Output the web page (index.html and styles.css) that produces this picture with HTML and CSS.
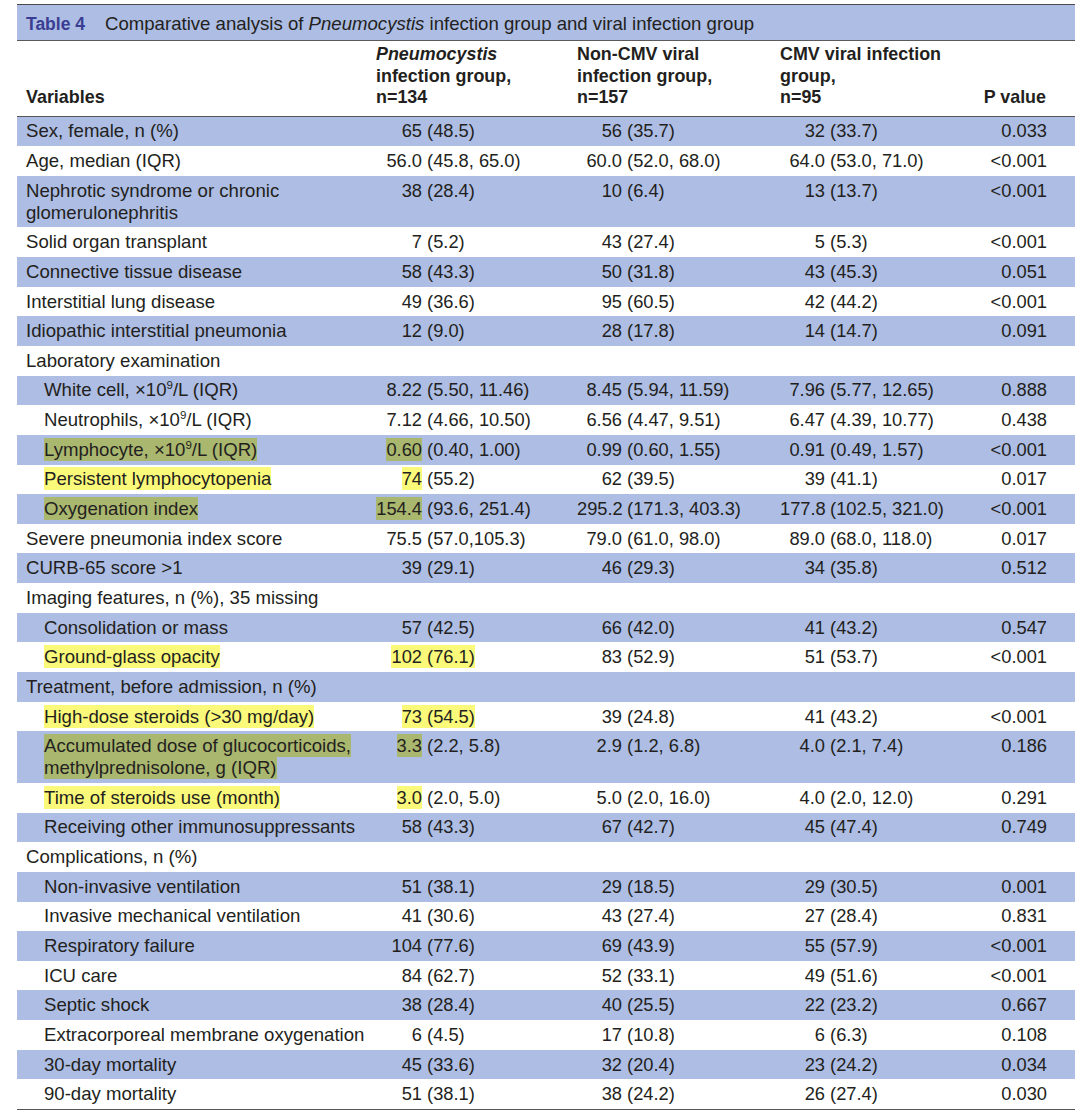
FILE: index.html
```html
<!DOCTYPE html>
<html lang="en">
<head>
<meta charset="utf-8">
<title>Table 4</title>
<link rel="stylesheet" href="styles.css">
</head>
<body>
<div class="sheet">
  <div class="caption"><span class="label">Table 4</span>Comparative analysis of <i>Pneumocystis</i> infection group and viral infection group</div>
  <table class="data">
    <colgroup>
      <col class="c-var"><col class="c-g1"><col class="c-g2"><col class="c-g3"><col class="c-p">
    </colgroup>
    <thead>
      <tr>
        <th class="var">Variables</th>
        <th class="grp"><i>Pneumocystis</i><br>infection group,<br>n=134</th>
        <th class="grp">Non-CMV viral<br>infection group,<br>n=157</th>
        <th class="grp">CMV viral infection<br>group,<br>n=95</th>
        <th class="pv">P value</th>
      </tr>
    </thead>
    <tbody>
      <tr><td class="var">Sex, female, n (%)</td><td class="num g1"><span class="lead">65</span> (48.5)</td><td class="num g2"><span class="lead">56</span> (35.7)</td><td class="num g3"><span class="lead">32</span> (33.7)</td><td class="pv">0.033</td></tr>
      <tr><td class="var">Age, median (IQR)</td><td class="num g1"><span class="lead">56.0</span> (45.8, 65.0)</td><td class="num g2"><span class="lead">60.0</span> (52.0, 68.0)</td><td class="num g3"><span class="lead">64.0</span> (53.0, 71.0)</td><td class="pv">&lt;0.001</td></tr>
      <tr><td class="var">Nephrotic syndrome or chronic glomerulonephritis</td><td class="num g1"><span class="lead">38</span> (28.4)</td><td class="num g2"><span class="lead">10</span> (6.4)</td><td class="num g3"><span class="lead">13</span> (13.7)</td><td class="pv">&lt;0.001</td></tr>
      <tr><td class="var">Solid organ transplant</td><td class="num g1"><span class="lead">7</span> (5.2)</td><td class="num g2"><span class="lead">43</span> (27.4)</td><td class="num g3"><span class="lead">5</span> (5.3)</td><td class="pv">&lt;0.001</td></tr>
      <tr><td class="var">Connective tissue disease</td><td class="num g1"><span class="lead">58</span> (43.3)</td><td class="num g2"><span class="lead">50</span> (31.8)</td><td class="num g3"><span class="lead">43</span> (45.3)</td><td class="pv">0.051</td></tr>
      <tr><td class="var">Interstitial lung disease</td><td class="num g1"><span class="lead">49</span> (36.6)</td><td class="num g2"><span class="lead">95</span> (60.5)</td><td class="num g3"><span class="lead">42</span> (44.2)</td><td class="pv">&lt;0.001</td></tr>
      <tr><td class="var">Idiopathic interstitial pneumonia</td><td class="num g1"><span class="lead">12</span> (9.0)</td><td class="num g2"><span class="lead">28</span> (17.8)</td><td class="num g3"><span class="lead">14</span> (14.7)</td><td class="pv">0.091</td></tr>
      <tr><td class="var" colspan="5">Laboratory examination</td></tr>
      <tr><td class="var sub">White cell, ×10<sup>9</sup>/L (IQR)</td><td class="num g1"><span class="lead">8.22</span> (5.50, 11.46)</td><td class="num g2"><span class="lead">8.45</span> (5.94, 11.59)</td><td class="num g3"><span class="lead">7.96</span> (5.77, 12.65)</td><td class="pv">0.888</td></tr>
      <tr><td class="var sub">Neutrophils, ×10<sup>9</sup>/L (IQR)</td><td class="num g1"><span class="lead">7.12</span> (4.66, 10.50)</td><td class="num g2"><span class="lead">6.56</span> (4.47, 9.51)</td><td class="num g3"><span class="lead">6.47</span> (4.39, 10.77)</td><td class="pv">0.438</td></tr>
      <tr><td class="var sub"><span class="hl-g">Lymphocyte, ×10<sup>9</sup>/L (IQR)</span></td><td class="num g1"><span class="lead"><span class="hl-g">0.60</span></span> (0.40, 1.00)</td><td class="num g2"><span class="lead">0.99</span> (0.60, 1.55)</td><td class="num g3"><span class="lead">0.91</span> (0.49, 1.57)</td><td class="pv">&lt;0.001</td></tr>
      <tr><td class="var sub"><span class="hl">Persistent lymphocytopenia</span></td><td class="num g1"><span class="lead"><span class="hl">74</span></span> (55.2)</td><td class="num g2"><span class="lead">62</span> (39.5)</td><td class="num g3"><span class="lead">39</span> (41.1)</td><td class="pv">0.017</td></tr>
      <tr><td class="var sub"><span class="hl-g">Oxygenation index</span></td><td class="num g1"><span class="lead"><span class="hl-g">154.4</span></span> (93.6, 251.4)</td><td class="num g2"><span class="lead">295.2</span> (171.3, 403.3)</td><td class="num g3"><span class="lead">177.8</span> (102.5, 321.0)</td><td class="pv">&lt;0.001</td></tr>
      <tr><td class="var">Severe pneumonia index score</td><td class="num g1"><span class="lead">75.5</span> (57.0,105.3)</td><td class="num g2"><span class="lead">79.0</span> (61.0, 98.0)</td><td class="num g3"><span class="lead">89.0</span> (68.0, 118.0)</td><td class="pv">0.017</td></tr>
      <tr><td class="var">CURB-65 score &gt;1</td><td class="num g1"><span class="lead">39</span> (29.1)</td><td class="num g2"><span class="lead">46</span> (29.3)</td><td class="num g3"><span class="lead">34</span> (35.8)</td><td class="pv">0.512</td></tr>
      <tr><td class="var" colspan="5">Imaging features, n (%), 35 missing</td></tr>
      <tr><td class="var sub">Consolidation or mass</td><td class="num g1"><span class="lead">57</span> (42.5)</td><td class="num g2"><span class="lead">66</span> (42.0)</td><td class="num g3"><span class="lead">41</span> (43.2)</td><td class="pv">0.547</td></tr>
      <tr><td class="var sub"><span class="hl">Ground-glass opacity</span></td><td class="num g1"><span class="lead"><span class="hl">102</span></span><span class="hl"> (76.1)</span></td><td class="num g2"><span class="lead">83</span> (52.9)</td><td class="num g3"><span class="lead">51</span> (53.7)</td><td class="pv">&lt;0.001</td></tr>
      <tr><td class="var" colspan="5">Treatment, before admission, n (%)</td></tr>
      <tr><td class="var sub"><span class="hl">High-dose steroids (&gt;30 mg/day)</span></td><td class="num g1"><span class="lead"><span class="hl">73</span></span><span class="hl"> (54.5)</span></td><td class="num g2"><span class="lead">39</span> (24.8)</td><td class="num g3"><span class="lead">41</span> (43.2)</td><td class="pv">&lt;0.001</td></tr>
      <tr><td class="var sub"><span class="hl-g">Accumulated dose of glucocorticoids, methylprednisolone, g (IQR)</span></td><td class="num g1"><span class="lead"><span class="hl-g">3.3</span></span> (2.2, 5.8)</td><td class="num g2"><span class="lead">2.9</span> (1.2, 6.8)</td><td class="num g3"><span class="lead">4.0</span> (2.1, 7.4)</td><td class="pv">0.186</td></tr>
      <tr><td class="var sub"><span class="hl">Time of steroids use (month)</span></td><td class="num g1"><span class="lead"><span class="hl">3.0</span></span> (2.0, 5.0)</td><td class="num g2"><span class="lead">5.0</span> (2.0, 16.0)</td><td class="num g3"><span class="lead">4.0</span> (2.0, 12.0)</td><td class="pv">0.291</td></tr>
      <tr><td class="var sub">Receiving other immunosuppressants</td><td class="num g1"><span class="lead">58</span> (43.3)</td><td class="num g2"><span class="lead">67</span> (42.7)</td><td class="num g3"><span class="lead">45</span> (47.4)</td><td class="pv">0.749</td></tr>
      <tr><td class="var" colspan="5">Complications, n (%)</td></tr>
      <tr><td class="var sub">Non-invasive ventilation</td><td class="num g1"><span class="lead">51</span> (38.1)</td><td class="num g2"><span class="lead">29</span> (18.5)</td><td class="num g3"><span class="lead">29</span> (30.5)</td><td class="pv">0.001</td></tr>
      <tr><td class="var sub">Invasive mechanical ventilation</td><td class="num g1"><span class="lead">41</span> (30.6)</td><td class="num g2"><span class="lead">43</span> (27.4)</td><td class="num g3"><span class="lead">27</span> (28.4)</td><td class="pv">0.831</td></tr>
      <tr><td class="var sub">Respiratory failure</td><td class="num g1"><span class="lead">104</span> (77.6)</td><td class="num g2"><span class="lead">69</span> (43.9)</td><td class="num g3"><span class="lead">55</span> (57.9)</td><td class="pv">&lt;0.001</td></tr>
      <tr><td class="var sub">ICU care</td><td class="num g1"><span class="lead">84</span> (62.7)</td><td class="num g2"><span class="lead">52</span> (33.1)</td><td class="num g3"><span class="lead">49</span> (51.6)</td><td class="pv">&lt;0.001</td></tr>
      <tr><td class="var sub">Septic shock</td><td class="num g1"><span class="lead">38</span> (28.4)</td><td class="num g2"><span class="lead">40</span> (25.5)</td><td class="num g3"><span class="lead">22</span> (23.2)</td><td class="pv">0.667</td></tr>
      <tr><td class="var sub">Extracorporeal membrane oxygenation</td><td class="num g1"><span class="lead">6</span> (4.5)</td><td class="num g2"><span class="lead">17</span> (10.8)</td><td class="num g3"><span class="lead">6</span> (6.3)</td><td class="pv">0.108</td></tr>
      <tr><td class="var sub">30-day mortality</td><td class="num g1"><span class="lead">45</span> (33.6)</td><td class="num g2"><span class="lead">32</span> (20.4)</td><td class="num g3"><span class="lead">23</span> (24.2)</td><td class="pv">0.034</td></tr>
      <tr><td class="var sub">90-day mortality</td><td class="num g1"><span class="lead">51</span> (38.1)</td><td class="num g2"><span class="lead">38</span> (24.2)</td><td class="num g3"><span class="lead">26</span> (27.4)</td><td class="pv">0.030</td></tr>
    </tbody>
  </table>
</div>
</body>
</html>
```

FILE: styles.css
```css
html, body {
  margin: 0;
  padding: 0;
  background: #ffffff;
}

body {
  font-family: "Liberation Sans", Arial, sans-serif;
  color: #231f20;
}

.sheet {
  width: 1058px;
  margin: 4px 0 0 17px;
}

.caption {
  background: #adbde3;
  border-top: 1.5px solid #4a4a4a;
  border-bottom: 1px solid #5a5a5a;
  padding-top: 3px;
  height: 32px;
  line-height: 32px;
  padding-left: 9px;
  font-size: 18.6px;
  color: #231f20;
  white-space: nowrap;
}

.caption .label {
  font-weight: bold;
  font-size: 17.5px;
  color: #3a3e93;
  margin-right: 20px;
}

.data {
  width: 1058px;
  table-layout: fixed;
  border-collapse: collapse;
  border-bottom: 1.5px solid #555555;
  font-size: 18.3px;
}

.c-var { width: 350px; }
.c-g1 { width: 201px; }
.c-g2 { width: 203px; }
.c-g3 { width: 179px; }
.c-p { width: 125px; }

thead th {
  font-weight: bold;
  font-size: 17.9px;
  line-height: 21.5px;
  text-align: left;
  vertical-align: bottom;
  padding: 3px 0 7px 9px;
  border-bottom: 1.5px solid #555555;
}

thead th.pv {
  text-align: right;
  padding-right: 29px;
}

tbody tr:nth-child(odd) {
  background: #adbde3;
}

td {
  line-height: 22px;
  padding: 3.85px 0 3.8px 9px;
  vertical-align: top;
}

td.var {
  font-size: 18.6px;
}

td.sub {
  padding-left: 27px;
}

td.num {
  white-space: nowrap;
}

.lead {
  display: inline-block;
  text-align: right;
}

.g1 .lead { width: 46px; }
.g2 .lead { width: 45px; }
.g3 .lead { width: 45px; }

td.pv {
  text-align: right;
  padding-right: 28px;
}

sup {
  font-size: 0.62em;
  line-height: 0;
  vertical-align: 0.6em;
}

.hl {
  background: #fbf97a;
  padding: 1px 0;
}

.hl-g {
  background: #aab76f;
  padding: 1px 0;
}
```
